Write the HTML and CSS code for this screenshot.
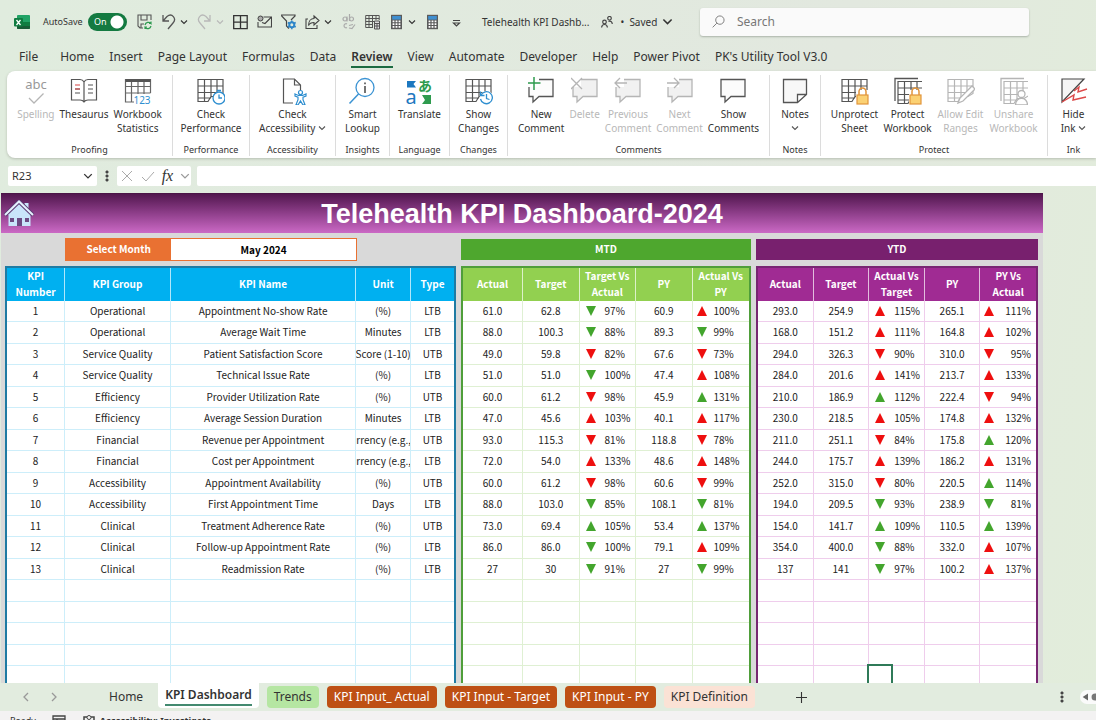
FILE: index.html
```html
<!DOCTYPE html>
<html lang="en">
<head>
<meta charset="utf-8">
<title>Telehealth KPI Dashboard</title>
<link rel="stylesheet" href="styles.css">
</head>
<body>
<svg class="defs" aria-hidden="true">
  <symbol id="chev" viewBox="0 0 8 8"><path d="M1 2.500 4 5.500 7 2.500" fill="none" stroke="currentColor" stroke-width="1.100"/></symbol>
  <symbol id="calc" viewBox="0 0 15 16"><rect x="2" y=".8" width="11" height="14.400" fill="#5b5b5b"/><rect x="3.200" y="2" width="8.600" height="3.600" fill="#3f8fd0"/><path d="M4.500 6.500v8M7.500 6.500v8M10.500 6.500v8" stroke="#fff" stroke-width="1.800" stroke-dasharray="1.8 .9"/></symbol>
  <symbol id="grid" viewBox="0 0 28 28"><path d="M1 2.500h25v14l-5 3H14l-3 5H1zM1 9h25M1 15.500h20M1 21h13M7.500 2.500v22M14 2.500v18M20 2.500v14" fill="none" stroke="currentColor" stroke-width="1.200"/></symbol>
  <symbol id="lock" viewBox="0 0 28 28"><path d="M15 13h13v15H15z" fill="#fff"/><path d="M18 18v-3.500a3.500 3.500 0 0 1 7 0V18" fill="none" stroke="#e2953b" stroke-width="1.500"/><rect x="16" y="18" width="11" height="9" fill="#fbd173" stroke="#e2953b" stroke-width="1.200"/></symbol>
  <symbol id="bubble" viewBox="0 0 28 28"><path d="M2 2.500h24v17H12l-6 5.500v-5.500H2z" stroke="currentColor" stroke-width="1.300"/></symbol>
</svg>

<header class="titlebar">
  <svg class="logo" viewBox="0 0 16 16"><rect x="3" y="1" width="13" height="14" rx="1" fill="#21a366"/><path d="M3 8h13v6a1 1 0 0 1-1 1H4a1 1 0 0 1-1-1z" fill="#185c37"/><path d="M9 8h7v4H9z" fill="#107c41"/><rect y="4" width="9" height="8.500" rx="1" fill="#107c41"/><path d="m2.500 6 4 5M6.500 6l-4 5" stroke="#fff" stroke-width="1.300"/></svg>
  <label class="autosave" for="autosave">AutoSave</label>
  <span class="switch"><input type="checkbox" id="autosave" checked><span class="switch-text">On</span></span>
  <div class="quick">
    <button aria-label="Save"><svg viewBox="0 0 15 16"><path d="M6 14H3L1 12V1h13v5M4 1v5h6V1M4 14v-4h3" fill="none" stroke="#555" stroke-width="1.100"/><path d="M8 11a3.500 3.500 0 0 1 6-1.500V7.500M14.500 9.500H12M14 12a3.500 3.500 0 0 1-6 1.500V15M8 13h2" fill="none" stroke="#2f9a50" stroke-width="1.200"/></svg></button>
    <span class="split"><button aria-label="Undo"><svg viewBox="0 0 15 16"><path d="M2 1v6h6M2 7l4-4.500c5-4 10 2 6 6.500L7 15" fill="none" stroke="#555" stroke-width="1.300"/></svg></button><button class="chev" aria-label="Undo list"><svg viewBox="0 0 8 8"><use href="#chev"/></svg></button></span>
    <span class="split off"><button aria-label="Redo"><svg viewBox="0 0 15 16"><path d="M13 1v6H7M13 7 9 2.500C4-1.500-1 4.500 3 9l5 6" fill="none" stroke="currentColor" stroke-width="1.300"/></svg></button><button class="chev" aria-label="Redo list"><svg viewBox="0 0 8 8"><use href="#chev"/></svg></button></span>
    <button aria-label="Borders"><svg viewBox="0 0 15 16"><path d="M.7 1.700h13.500v13H.7zM7.500 1.700v13M.7 8.200h13.500" fill="none" stroke="#333" stroke-width="1.300"/></svg></button>
    <button aria-label="Mail"><svg viewBox="0 0 15 16"><path d="M6.500 3h8v10H1V8M5 8.500l3 1 6-6" fill="none" stroke="#444" stroke-width="1.100"/><circle cx="3.500" cy="4.500" r="2.500" fill="#aaa" stroke="#444"/></svg></button>
    <button aria-label="Filter"><svg viewBox="0 0 15 16"><path d="M8 14.500 5.500 12V7L.7 2V1H14v1L10 6" fill="none" stroke="#444" stroke-width="1.200"/><circle cx="10.800" cy="10.800" r="2.500" fill="none" stroke="#2f86c9" stroke-width="2"/><path d="M10.800 6.500v2M10.800 13v2.300M6.800 8.500l1.700 1M13 12l1.700 1M6.800 13l1.700-1M13 9.500l1.700-1" stroke="#2f86c9" stroke-width="1.500"/></svg></button>
    <span class="split"><button aria-label="Share"><svg viewBox="0 0 15 16"><path d="M3 5H1v9.500h11V11M9 2l5 4.500L9 11V8.500c-3 0-4.500 1-5.500 3C3.500 7 6 4.500 9 4.500z" fill="none" stroke="#444" stroke-width="1.100"/></svg></button><button class="chev" aria-label="Share list"><svg viewBox="0 0 8 8"><use href="#chev"/></svg></button></span>
    <button class="off" aria-label="Replace"><svg viewBox="0 0 15 16"><g fill="none" stroke="#aaa" stroke-width="1.200"><circle cx="4" cy="5" r="2"/><path d="M6 2.500V7.500M8.500 0v7"/><circle cx="10.500" cy="5" r="2"/><path d="M6 10a2 2 0 1 0 0 3.500M8 14l3 .5 3-4M8 11.500l4-1"/></g></svg></button>
    <button aria-label="Pivot table"><svg viewBox="0 0 15 16"><path d="M8 13.500H.7v-12h13.500V6M.7 4.500h13.500M.7 7.500H9M.7 10.500H8M4 1.500v12M7.500 1.500v12M11 1.500V6" fill="none" stroke="#555"/><path d="M9.500 7h5v8h-5zM9.500 9.500h5M9.500 12h5M12 9.500V15" fill="#ddd" stroke="#555"/></svg></button>
    <span class="split"><button aria-label="Calculate now"><svg viewBox="0 0 15 16"><use href="#calc"/></svg></button><button class="chev" aria-label="Calculate list"><svg viewBox="0 0 8 8"><use href="#chev"/></svg></button></span>
    <button aria-label="Calculate sheet"><svg viewBox="0 0 15 16"><use href="#calc"/></svg></button>
    <button aria-label="Customize toolbar"><svg viewBox="0 0 15 16"><path d="M4 6.500h7M4.500 9 7.500 12l3-3z" fill="none" stroke="#444" stroke-width="1.200"/></svg></button>
  </div>
  <div class="docname">
    <span>Telehealth KPI Dashb...</span>
    <svg class="people" viewBox="0 0 12 12"><g fill="none" stroke="#444" stroke-width="1.200"><circle cx="3.500" cy="6" r="1.800"/><path d="M.6 11.500c.3-4 5.500-4 5.800 0"/><circle cx="8.500" cy="2.300" r="1.800"/><path d="M7.500 5.500c2-1 3.600.3 3.800 2.500"/></g></svg>
    <button class="saved">•&nbsp; Saved <svg viewBox="0 0 8 8"><use href="#chev"/></svg></button>
  </div>
  <div class="search">
    <svg viewBox="0 0 14 14"><circle cx="8.500" cy="5.500" r="4.500" fill="none" stroke="#777"/><path d="M5.200 8.800.7 13.300" stroke="#777"/></svg>
    <input type="text" placeholder="Search" aria-label="Search">
  </div>
</header>

<nav class="menu">
  <a href="#file">File</a><a href="#home">Home</a><a href="#insert">Insert</a><a href="#layout">Page Layout</a><a href="#formulas">Formulas</a><a href="#data">Data</a><a class="current" href="#review">Review</a><a href="#view">View</a><a href="#automate">Automate</a><a href="#developer">Developer</a><a href="#help">Help</a><a href="#pivot">Power Pivot</a><a href="#pk">PK's Utility Tool V3.0</a>
</nav>

<section class="ribbon" aria-label="Review">
  <div class="group proofing">
    <div class="tools">
      <button class="off"><svg viewBox="0 0 28 28"><text x="14" y="12" class="abc">abc</text><path d="m7 21 5 5 9.500-9.500" fill="none" stroke="#b5b5b5" stroke-width="1.300"/></svg>Spelling</button>
      <button><svg viewBox="0 0 28 28"><path d="M14 5c-1-2-2-2.500-4-2.500H1.500V23H10c2 0 3 .5 4 2 1-1.500 2-2 4-2h8.500V2.500H18c-2 0-3 .5-4 2.500zv19M18 8h5M18 12h5M18 16h5M5 16h5M5 12h5" fill="none" stroke="#555" stroke-width="1.200"/><path d="M5 8h5M5 12h5" stroke="#d64545" stroke-width="1.200"/></svg>Thesaurus</button>
      <button><svg viewBox="0 0 28 28"><path d="M10 25H1.500V2.500h25V16M1.500 9.500h25M1.500 16h25M7.500 4v21M14 4v13M20 4v13" fill="none" stroke="#666" stroke-width="1.200"/><path d="M1.500 2h25v3h-25z" fill="#555"/><path d="M10 17h18v11H10z" fill="#fff"/><text x="18" y="27" class="digits">123</text></svg>Workbook<br>Statistics</button>
    </div>
    <h2>Proofing</h2>
  </div>
  <div class="group performance">
    <div class="tools"><button><svg viewBox="0 0 28 28"><use href="#grid"/><circle cx="22" cy="21" r="6" fill="#fff" stroke="#2f8fd0" stroke-width="1.300"/><path d="M20 13.500h4M22 17.500V21h3" fill="none" stroke="#2f8fd0" stroke-width="1.300"/></svg>Check<br>Performance</button></div>
    <h2>Performance</h2>
  </div>
  <div class="group access">
    <div class="tools"><button><svg viewBox="0 0 28 28"><path d="M14 26H4.500V2h11l6 6v5M15.500 2v6h6" fill="none" stroke="#555" stroke-width="1.200"/><g fill="#fff" stroke="#2f8fd0" stroke-width="1.200"><circle cx="21.500" cy="15.500" r="2"/><path d="m16 17 3.500 1.500h4L27 17v2l-3 1.200v2.500l2 5-2 .3-2.500-4-2.500 4-2-.3 2-5v-2.500L16 19z"/></g></svg>Check<br>Accessibility <svg class="mini" viewBox="0 0 8 8"><use href="#chev"/></svg></button></div>
    <h2>Accessibility</h2>
  </div>
  <div class="group insights">
    <div class="tools"><button><svg viewBox="0 0 28 28"><circle cx="17" cy="10.500" r="9" fill="none" stroke="#3b93d3" stroke-width="1.300"/><path d="M10.500 17 1.500 26.500" stroke="#3b93d3" stroke-width="1.500"/><path d="M17 9v7M17 5.500v1.800" stroke="#444" stroke-width="1.500"/></svg>Smart<br>Lookup</button></div>
    <h2>Insights</h2>
  </div>
  <div class="group language">
    <div class="tools"><button><svg viewBox="0 0 28 28"><path d="M2 4h9l-2.500 3 2.500 3.500H2z" fill="#1c78c0"/><text x="6" y="27" class="latin">a</text><text x="20" y="14" class="kana">あ</text><path d="M17 18h9v9h-9l3-4z" fill="#2e9b4e"/></svg>Translate</button></div>
    <h2>Language</h2>
  </div>
  <div class="group changes">
    <div class="tools"><button><svg viewBox="0 0 28 28"><use href="#grid"/><circle cx="21.500" cy="21" r="7" fill="#fff"/><path d="M16 18a6 6 0 1 1-.5 4M15.500 14.500V18.500h4M21.500 17v4.500l3 1" fill="none" stroke="#2f8fd0" stroke-width="1.300"/></svg>Show<br>Changes</button></div>
    <h2>Changes</h2>
  </div>
  <div class="group comments">
    <div class="tools">
      <button><svg class="outline" viewBox="0 0 28 28"><use href="#bubble"/><path d="M0 0h12v10H0z" fill="#fff"/><path d="M7 0v13M1 6h12.500" stroke="#2e9b4e" stroke-width="1.500"/></svg>New<br>Comment</button>
      <button class="off"><svg viewBox="0 0 28 28"><use href="#bubble"/><path d="M0 0h10v10H0z" fill="#fff"/><path d="m0 1 11 11M11 1 0 12" stroke="#b5b5b5" stroke-width="1.300"/></svg>Delete</button>
      <button class="off"><svg viewBox="0 0 28 28"><use href="#bubble"/><path d="M0 0h10v10H0z" fill="#fff"/><path d="M13 6H1m5-5L1 6l5 5" fill="none" stroke="#b5b5b5" stroke-width="1.300"/></svg>Previous<br>Comment</button>
      <button class="off"><svg viewBox="0 0 28 28"><use href="#bubble"/><path d="M0 0h13v10H0z" fill="#fff"/><path d="M1 6h12M8 1l5 5-5 5" fill="none" stroke="#b5b5b5" stroke-width="1.300"/></svg>Next<br>Comment</button>
      <button><svg class="outline" viewBox="0 0 28 28"><use href="#bubble"/></svg>Show<br>Comments</button>
    </div>
    <h2>Comments</h2>
  </div>
  <div class="group notes">
    <div class="tools"><button><svg viewBox="0 0 28 28"><path d="M2.500 2.500h23v15l-9 8h-14zM25.500 17.500h-9v8" fill="#f8f8f8" stroke="#555" stroke-width="1.300"/></svg>Notes<br><svg class="mini" viewBox="0 0 8 8"><use href="#chev"/></svg></button></div>
    <h2>Notes</h2>
  </div>
  <div class="group protect">
    <div class="tools">
      <button><svg viewBox="0 0 28 28"><use href="#grid"/><use href="#lock"/></svg>Unprotect<br>Sheet</button>
      <button><svg viewBox="0 0 28 28"><path d="M1 24V1.500h23" fill="none" stroke="#555" stroke-width="1.300"/><svg x="3" y="2" width="25" height="25" viewBox="0 0 28 28"><use href="#grid"/></svg><use href="#lock"/></svg>Protect<br>Workbook</button>
      <button class="off"><svg viewBox="0 0 28 28"><use href="#grid"/><path d="m11 26 2-5L25 9l3 3-12 12z" fill="#fff" stroke="#b5b5b5" stroke-width="1.300"/></svg>Allow Edit<br>Ranges</button>
      <button class="off"><svg viewBox="0 0 28 28"><path d="M1 24V1.500h23" fill="none" stroke="#b5b5b5" stroke-width="1.300"/><svg x="3" y="2" width="25" height="25" viewBox="0 0 28 28"><use href="#grid"/></svg><circle cx="21.500" cy="17" r="3.500" fill="#fff" stroke="#b5b5b5" stroke-width="1.300"/><path d="M15.500 28c0-9 12-9 12 0z" fill="#fff" stroke="#b5b5b5" stroke-width="1.300"/></svg>Unshare<br>Workbook</button>
    </div>
    <h2>Protect</h2>
  </div>
  <div class="group ink">
    <div class="tools"><button><svg viewBox="0 0 28 28"><path d="M2 2h22L2 25z" fill="#f5f5f5" stroke="#444" stroke-width="1.200"/><path d="m14 14 5-4-1 5 9-3M2 25l12-7-1 5 13-3" fill="none" stroke="#dc4a4a" stroke-width="1.400"/></svg>Hide<br>Ink <svg class="mini" viewBox="0 0 8 8"><use href="#chev"/></svg></button></div>
    <h2>Ink</h2>
  </div>
</section>

<div class="formula">
  <button class="namebox">R23 <svg viewBox="0 0 8 8"><use href="#chev"/></svg></button>
  <span class="dots"></span>
  <div class="fx">
    <button aria-label="Cancel"><svg viewBox="0 0 14 14"><path d="m2 2 10 10M12 2 2 12" stroke="#aaa"/></svg></button>
    <button aria-label="Enter"><svg viewBox="0 0 14 14"><path d="m1 8 4 4 8-9" fill="none" stroke="#aaa"/></svg></button>
    <button class="fxname">fx</button>
    <button class="chev off" aria-label="Functions"><svg viewBox="0 0 8 8"><use href="#chev"/></svg></button>
  </div>
  <input type="text" class="entry" aria-label="Formula">
</div>

<main class="sheet">
  <div class="banner">
    <svg viewBox="0 0 30 28"><path d="M4.500 14h22v12h-22z" fill="#c9e4fa"/><path d="M20.500 3h4v8h-4z" fill="#c9e4fa"/><path d="m15 3 12 12H3z" fill="#c9e4fa"/><path d="M1 15 15 1.500 29 15" fill="none" stroke="#5d3a74" stroke-width="4"/><path d="M1 15 15 1.500 29 15" fill="none" stroke="#e4f1fd" stroke-width="2"/><path d="M6 18h4v4H6zM21 18h4v4h-4zM13 18h5v8h-5z" fill="#6b4a82"/></svg>
    <h1>Telehealth KPI Dashboard-2024</h1>
  </div>
  <div class="bars">
    <div class="month"><label for="month">Select Month</label><select id="month"><option>May 2024</option></select></div>
    <h2 class="mtd">MTD</h2>
    <h2 class="ytd">YTD</h2>
  </div>
  <div class="tables">
    <table class="kpis">
      <colgroup><col class="c-num"><col class="c-group"><col class="c-name"><col class="c-unit"><col class="c-type"></colgroup>
      <thead><tr><th>KPI<br>Number</th><th>KPI Group</th><th>KPI Name</th><th>Unit</th><th>Type</th></tr></thead>
      <tbody id="kpi-rows"></tbody>
    </table>
    <table class="mtd">
      <colgroup><col class="c-first"><col span="4"></colgroup>
      <thead><tr><th>Actual</th><th>Target</th><th>Target Vs<br>Actual</th><th>PY</th><th>Actual Vs<br>PY</th></tr></thead>
      <tbody id="mtd-rows"></tbody>
    </table>
    <table class="ytd">
      <thead><tr><th>Actual</th><th>Target</th><th>Actual Vs<br>Target</th><th>PY</th><th>PY Vs<br>Actual</th></tr></thead>
      <tbody id="ytd-rows"></tbody>
    </table>
  </div>
</main>

<footer class="sheettabs">
  <button class="nav" aria-label="Previous sheet"><svg viewBox="0 0 10 10"><path d="M7 1 3 5l4 4" fill="none" stroke="#999" stroke-width="1.300"/></svg></button>
  <button class="nav" aria-label="Next sheet"><svg viewBox="0 0 10 10"><path d="m3 1 4 4-4 4" fill="none" stroke="#999" stroke-width="1.300"/></svg></button>
  <button class="tab plain">Home</button>
  <button class="tab active"><span>KPI Dashboard</span></button>
  <button class="tab green">Trends</button>
  <button class="tab rust">KPI Input_ Actual</button>
  <button class="tab rust">KPI Input - Target</button>
  <button class="tab rust">KPI Input - PY</button>
  <button class="tab peach">KPI Definition</button>
  <button class="add" aria-label="New sheet"><svg viewBox="0 0 10 10"><path d="M5 0v10M0 5h10" stroke="#333"/></svg></button>
  <span class="dots push"></span>
  <span class="scroll"><svg viewBox="0 0 18 12"><path d="M9 2v8L3 6z" fill="#666"/><circle cx="17" cy="6" r="4" fill="#777"/></svg></span>
</footer>
<div class="status"><span>Ready</span><svg viewBox="0 0 14 12"><path d="M1 1h12v10H1zM1 4h12M5 4v7" fill="none" stroke="#444" stroke-width="1.300"/></svg><svg viewBox="0 0 14 12"><circle cx="7" cy="2.500" r="2" fill="none" stroke="#444"/><path d="M5 2H2v10M9 2h3v10M4 6h6" fill="none" stroke="#444" stroke-width="1.500"/></svg><b>Accessibility: Investigate</b></div>
<script src="dashboard.js"></script>
</body>
</html>
```
FILE: styles.css
```css
:root {
  --ui: "Noto Sans", "Open Sans", sans-serif;
  --cell: "Noto Sans CJK SC", "Noto Sans", sans-serif;
  --chrome: #e2ecdf;
  --text: #333;
  --muted: #b8b8b8;
}
* { box-sizing: border-box; }
body {
  margin: 0;
  height: 100vh;
  display: flex;
  flex-direction: column;
  overflow: hidden;
  background: linear-gradient(100deg, #e0ecde, #e2e8df 70%, #e2eddb);
  color: var(--text);
  font: 12px/16px var(--ui);
}
button, input, select { font: inherit; color: inherit; border: 0; background: none; padding: 0; margin: 0; }
button svg { display: block; }
h1, h2 { margin: 0; }
.defs { display: none; }
.off { color: var(--muted); }

.titlebar { display: flex; align-items: center; flex: 0 0 43px; padding-left: 14px; font-size: 10px; }
.logo { width: 16px; height: 16px; }
.autosave { width: 45px; margin-left: 13px; font-size: 9px; }
.switch { position: relative; display: flex; width: 39px; height: 18px; }
.switch input { appearance: none; width: 100%; height: 100%; border-radius: 9px; background: radial-gradient(circle at 29px 9px, #fff 6px, transparent 7px), #147a41; }
.switch-text { position: absolute; left: 6px; top: 1px; color: #fff; font-size: 9px; }
.quick { display: flex; align-items: center; gap: 9px; margin-left: 10px; }
.quick svg { width: 15px; height: 16px; }
.split { display: flex; align-items: center; gap: 4px; }
.quick .chev svg { width: 8px; height: 8px; }
.docname { display: flex; align-items: center; margin-left: 18px; white-space: nowrap; }
.people { width: 12px; height: 12px; margin: 0 7px 0 12px; }
.saved { display: flex; align-items: center; gap: 5px; }
.saved svg { width: 11px; height: 11px; }
.search { display: flex; align-items: center; flex: 0 1 329px; height: 28px; margin: 0 67px 0 auto; padding-left: 12px; gap: 12px; background: #fafafa; border-radius: 3px; box-shadow: 0 1px 2px #aab3a8; }
.search svg { width: 13px; height: 13px; }
.search input { flex: 1; min-width: 0; font-size: 12px; outline: 0; }
.search input::placeholder { color: #777; opacity: 1; }

.menu { display: flex; align-items: flex-start; flex: 0 0 28px; gap: 15px; padding: 6px 0 0 19px; white-space: nowrap; }
.menu a { color: var(--text); text-decoration: none; padding-bottom: 1px; }
.menu a:first-child { margin-right: 7px; }
.menu .current { font-weight: 600; border-bottom: 2px solid #1c6b41; }

.ribbon { display: flex; flex: 0 0 87px; margin-left: 7px; background: #fff; border-radius: 8px 0 0 8px; box-shadow: 0 1px 3px #b5bdb1; font-size: 10px; line-height: 14px; overflow: hidden; }
.group { display: flex; flex-direction: column; flex: none; justify-content: space-between; margin: 4px 0 2px; padding-top: 2px; border-right: 1px solid #dcdcdc; }
.tools { display: flex; align-items: flex-start; justify-content: center; }
.tools button { display: block; flex: none; padding: 0 2px; text-align: center; white-space: nowrap; }
.tools svg { width: 28px; height: 28px; margin: 0 auto 2px; color: #555; }
.tools .off svg { color: #b5b5b5; fill: #f1f1f1; }
.tools .outline { fill: #fcfcfc; }
.tools .mini { display: inline-block; width: 8px; height: 8px; margin: 0; fill: none; }
.group h2 { font-size: 9px; line-height: 12px; font-weight: 400; text-align: center; }
.proofing { width: 166px; }
.performance { width: 77px; }
.access { width: 86px; }
.insights { width: 54px; }
.language { width: 60px; }
.changes { width: 58px; }
.comments { width: 262px; }
.notes { width: 51px; }
.protect { width: 227px; }
.ink { width: 51px; border: 0; }
.proofing .tools, .comments .tools { gap: 1px; }
.protect button { width: 53px; }
.tools .off .abc { font: 13px var(--ui); fill: #999; text-anchor: middle; }
.digits { font: 10px var(--ui); fill: #2f8fd0; text-anchor: middle; }
.latin { font: 20px var(--ui); fill: #1c78c0; text-anchor: middle; }
.kana { font: 700 14px "Noto Sans CJK JP", sans-serif; fill: #2e9b4e; text-anchor: middle; }

.formula { display: flex; flex: 0 0 35px; align-items: flex-start; padding: 8px 0 0 8px; font-size: 11px; }
.formula > * { height: 20px; }
.namebox { display: flex; align-items: center; justify-content: space-between; width: 89px; padding: 0 4px; background: #fff; border-radius: 2px; }
.namebox svg { width: 10px; height: 10px; }
.dots { width: 20px; background: radial-gradient(circle, #444 1px, transparent 2px) center / 4px 4px no-repeat, radial-gradient(circle, #444 1px, transparent 2px) center 4px / 4px 4px no-repeat, radial-gradient(circle, #444 1px, transparent 2px) center 12px / 4px 4px no-repeat; }
.fx { display: flex; align-items: center; justify-content: space-between; width: 74px; margin-right: 6px; padding: 0 1px 0 3px; background: #fff; border-radius: 2px; }
.fx svg { width: 14px; height: 14px; }
.fx .chev svg { width: 10px; height: 10px; color: #999; }
.fxname { font: italic 16px/16px "Liberation Serif", serif; }
.entry { flex: 1; background: #fff; border-radius: 2px 0 0 2px; }

.sheet { flex: 1; min-height: 0; overflow: hidden; margin: 0 53px 0 1px; background: #d9d9d9; font-family: var(--cell); }
.banner { display: flex; align-items: center; height: 40px; background: linear-gradient(#52174f, #8f3f8b 50%, #cb69c5); border-top: 1px solid #4b1547; }
.banner svg { width: 30px; height: 28px; margin-left: 3px; }
.banner h1 { flex: 1; margin-right: 33px; text-align: center; color: #fff; font: 700 27px/32px "Liberation Sans", sans-serif; }
.bars, .tables { display: grid; grid-template-columns: 451fr 290fr 282fr; column-gap: 5px; padding: 0 5px 0 4px; }
.bars { padding-top: 5px; align-items: center; }
.month { display: grid; grid-template-columns: 106fr 186fr; margin: 0 99px 0 60px; height: 23px; border: 1px solid #e97132; background: #fff; font: 700 10px/20px var(--cell); }
.month label { background: #e97132; color: #fff; text-align: center; }
.month select { appearance: none; color: #000; text-align-last: center; }
.bars h2 { height: 21px; color: #fff; text-align: center; font: 700 10px/20px var(--cell); }
.bars .mtd { background: #4ea72e; }
.bars .ytd { background: #78206e; }
.tables { padding-top: 5px; }

table { width: 100%; table-layout: fixed; border-collapse: separate; border-spacing: 0; background: #fff; border: 2px solid var(--edge); font-size: 10px; line-height: 18px; }
.kpis { --edge: #1f7ba3; --head: #00b0f0; --line: #cdeefa; }
table.mtd { --edge: #4f9e3a; --head: #92d050; --line: #dff0d3; }
table.ytd { --edge: #782672; --head: #a02b93; --line: #efcdec; }
th { height: 33px; padding: 0 0 1px; background: var(--head); color: #fff; font-weight: 700; line-height: 16px; border-right: 1px solid #ffffffb0; }
td { height: 21px; padding: 0 0 1px; text-align: center; white-space: nowrap; border-right: 1px solid var(--line); border-bottom: 1px solid var(--line); color: #222; }
tr:nth-child(even) td { height: 22px; }
th:last-child, td:last-child { border-right: 0; }
.c-num { width: 13%; }
.c-group { width: 23.7%; }
.c-name { width: 41.4%; }
.c-unit { width: 12.3%; }
.c-type { width: 9.6%; }
.c-first { width: 21%; }
.clip { display: flex; justify-content: center; overflow: hidden; }
.trend { display: flex; align-items: center; gap: 9px; padding-left: 6px; }
td:last-child .trend { gap: 7px; padding-left: 4px; }
.ytd td:last-child .trend { justify-content: space-between; padding-right: 5px; }
.trend svg { width: 10px; height: 10px; }
.good { fill: #43a52d; }
.bad { fill: #ee0f0f; }
.picked { position: relative; }
.cursor { position: absolute; left: -2px; top: -2px; width: 26px; height: 24px; border: 2px solid #2f7a58; }

.sheettabs { display: flex; align-items: flex-start; flex: 0 0 28px; background: var(--chrome); }
.sheettabs button { flex: none; }
.nav { width: 28px; height: 28px; }
.nav:first-child { margin-left: 12px; }
.nav svg { width: 10px; height: 10px; margin: auto; }
.tab { height: 22px; margin: 3px 8px 0 0; padding: 0 7px; border-radius: 4px; }
.tab.plain { margin-left: 34px; }
.tab.active { height: 25px; margin-top: 0; background: #fff; border-radius: 0 0 4px 4px; font-weight: 600; }
.active span { display: block; border-bottom: 2px solid #438a70; line-height: 18px; }
.green { background: #b5e6a2; }
.rust { background: #be5014; color: #fff; }
.peach { background: #fbe2d5; }
.add { width: 22px; height: 28px; margin-left: 28px; }
.add svg { width: 11px; height: 11px; margin: auto; }
.push { height: 20px; margin: 4px 8px 0 auto; }
.scroll { display: flex; width: 16px; height: 14px; margin-top: 7px; background: #fafafa; border-radius: 7px 0 0 7px; }
.scroll svg { width: 18px; height: 14px; }
.status { display: flex; flex: 0 0 9px; gap: 16px; padding: 4px 0 0 10px; overflow: hidden; background: #f3f2f2; font-size: 9px; line-height: 12px; }
.status svg { flex: none; width: 14px; height: 12px; }
.status b { margin-left: -12px; }
```
FILE: dashboard.js
```js
// Trend codes: u/d for up/down, g/r for green/red, then the percentage.
const kpis = [
  ["Operational", "Appointment No-show Rate", "(%)", "LTB", "61.0 62.8 dg97 60.9 ur100", "293.0 254.9 ur115 265.1 ur111"],
  ["Operational", "Average Wait Time", "Minutes", "LTB", "88.0 100.3 dg88 89.3 dg99", "168.0 151.2 ur111 164.8 ur102"],
  ["Service Quality", "Patient Satisfaction Score", "Score (1-10)", "UTB", "49.0 59.8 dr82 67.6 dr73", "294.0 326.3 dr90 310.0 dr95"],
  ["Service Quality", "Technical Issue Rate", "(%)", "LTB", "51.0 51.0 dg100 47.4 ur108", "284.0 201.6 ur141 213.7 ur133"],
  ["Efficiency", "Provider Utilization Rate", "(%)", "UTB", "60.0 61.2 dr98 45.9 ug131", "210.0 186.9 ug112 222.4 dr94"],
  ["Efficiency", "Average Session Duration", "Minutes", "LTB", "47.0 45.6 ur103 40.1 ur117", "230.0 218.5 ur105 174.8 ur132"],
  ["Financial", "Revenue per Appointment", "Currency (e.g., $)", "UTB", "93.0 115.3 dr81 118.8 dr78", "211.0 251.1 dr84 175.8 ug120"],
  ["Financial", "Cost per Appointment", "Currency (e.g., $)", "LTB", "72.0 54.0 ur133 48.6 ur148", "244.0 175.7 ur139 186.2 ur131"],
  ["Accessibility", "Appointment Availability", "(%)", "UTB", "60.0 61.2 dr98 60.6 dr99", "252.0 315.0 dr80 220.5 ug114"],
  ["Accessibility", "First Appointment Time", "Days", "LTB", "88.0 103.0 dg85 108.1 dg81", "194.0 209.5 dg93 238.9 dg81"],
  ["Clinical", "Treatment Adherence Rate", "(%)", "UTB", "73.0 69.4 ug105 53.4 ug137", "154.0 141.7 ug109 110.5 ug139"],
  ["Clinical", "Follow-up Appointment Rate", "(%)", "LTB", "86.0 86.0 dg100 79.1 ur109", "354.0 400.0 dg88 332.0 ur107"],
  ["Clinical", "Readmission Rate", "(%)", "LTB", "27 30 dg91 27 dg99", "137 141 dg97 100.2 ur137"]
];
const totalRows = 18;

function cell(value) {
  const trend = /^([ud])([gr])(\d+)$/.exec(value);
  if (!trend) return `<td>${value}</td>`;
  const shape = trend[1] === "u" ? "M5 0 10 10H0z" : "M0 0h10L5 10z";
  const tone = trend[2] === "g" ? "good" : "bad";
  return `<td><span class="trend"><svg class="${tone}" viewBox="0 0 10 10"><path d="${shape}"/></svg>${trend[3]}%</span></td>`;
}

function fill(id, rows) {
  const blank = "<td></td>".repeat(5);
  const html = rows.slice();
  while (html.length < totalRows) html.push(blank);
  document.getElementById(id).innerHTML = html.map(r => `<tr>${r}</tr>`).join("");
}

fill("kpi-rows", kpis.map((k, i) =>
  `<td>${i + 1}</td><td>${k[0]}</td><td>${k[1]}</td><td><span class="clip">${k[2]}</span></td><td>${k[3]}</td>`));
fill("mtd-rows", kpis.map(k => k[4].split(" ").map(cell).join("")));
fill("ytd-rows", kpis.map(k => k[5].split(" ").map(cell).join("")));

const picked = document.querySelector("#ytd-rows tr:last-child td:nth-child(3)");
picked.classList.add("picked");
picked.innerHTML = '<span class="cursor"></span>';
```
